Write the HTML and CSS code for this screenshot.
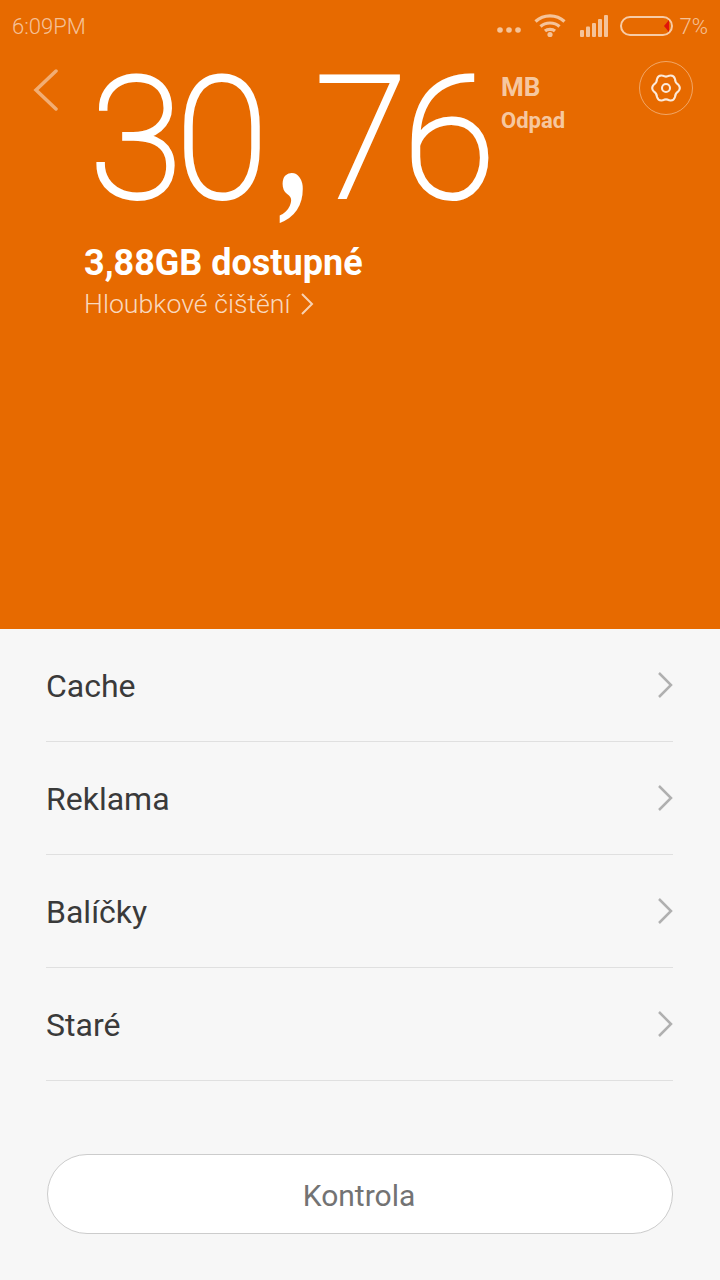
FILE: index.html
```html
<!DOCTYPE html>
<html lang="en">
<head>
  <meta charset="UTF-8" />
  <meta name="viewport" content="width=device-width, initial-scale=1.0" />
  <title>Cleaner</title>
  <link rel="stylesheet" href="styles.css">
</head>
<body>
  <div class="hero">
    <div class="statusbar">
      <span class="time">6:09PM</span>
      <div class="status-icons">
        <svg class="dots" width="26" height="8" viewBox="0 0 26 8"><circle cx="4" cy="4" r="2.8"/><circle cx="13" cy="4" r="2.8"/><circle cx="22" cy="4" r="2.8"/></svg>
        <svg class="wifi" width="32" height="25" viewBox="0 0 32 25"><path d="M1.5 8.5C9.5 1 22.5 1 30.5 8.5M6.5 13.5C11.5 8.8 20.5 8.8 25.5 13.5M11 18C13.5 15.8 18.500 15.800 21 18"/><circle cx="16" cy="21.500" r="2.600"/></svg>
        <svg class="signal" width="28" height="22" viewBox="0 0 28 22"><rect x="0" y="15" width="4" height="7" rx="1"/><rect x="6" y="11.500" width="4" height="10.500" rx="1"/><rect x="12" y="8" width="4" height="14" rx="1"/><rect x="18" y="4" width="4" height="18" rx="1"/><rect x="24" y="0" width="4" height="22" rx="1"/></svg>
        <div class="battery"><span class="battery-level"></span></div>
        <span class="percent">7%</span>
      </div>
    </div>
    <div class="summary">
      <svg class="back" width="26" height="42" viewBox="0 0 26 42"><path d="M23 2L3 21L23 40"/></svg>
      <div class="amount">30<span class="comma">,</span><span class="decimals">76</span></div>
      <div class="unit">
        <span class="unit-mb">MB</span>
        <span class="unit-label">Odpad</span>
      </div>
      <div class="settings">
        <svg width="34" height="34" viewBox="0 0 28 28"><path d="M24.14 11.28Q26.6 14 24.14 16.72Q21.45 18.3 21.42 21.42Q20.3 24.91 16.72 24.14Q14 22.6 11.28 24.14Q7.7 24.91 6.58 21.42Q6.55 18.3 3.86 16.72Q1.4 14 3.86 11.28Q6.55 9.7 6.58 6.58Q7.7 3.09 11.28 3.86Q14 5.4 16.72 3.86Q20.3 3.09 21.42 6.58Q21.45 9.7 24.14 11.28Z"/><circle cx="14" cy="14" r="3.3"/></svg>
      </div>
    </div>
    <div class="free">
      <div class="free-size">3,88GB dostupné</div>
      <div class="deep-clean">Hloubkové čištění
        <svg width="16" height="24" viewBox="0 0 16 24"><path d="M3 2L13 12L3 22"/></svg>
      </div>
    </div>
  </div>

  <div class="list">
    <div class="row"><span>Cache</span><svg width="18" height="28" viewBox="0 0 18 28"><path d="M3 2L15 14L3 26"/></svg></div>
    <div class="row"><span>Reklama</span><svg width="18" height="28" viewBox="0 0 18 28"><path d="M3 2L15 14L3 26"/></svg></div>
    <div class="row"><span>Balíčky</span><svg width="18" height="28" viewBox="0 0 18 28"><path d="M3 2L15 14L3 26"/></svg></div>
    <div class="row"><span>Staré</span><svg width="18" height="28" viewBox="0 0 18 28"><path d="M3 2L15 14L3 26"/></svg></div>
  </div>

  <div class="footer">
    <button class="scan">Kontrola</button>
  </div>
</body>
</html>
```

FILE: styles.css
```css
html, body {
  margin: 0;
  padding: 0;
}
body {
  width: 720px;
  height: 1280px;
  overflow: hidden;
  background: #f7f7f7;
  font-family: Roboto, sans-serif;
}
.hero {
  height: 629px;
  background: #e76a00;
  color: #fff;
}
.statusbar {
  height: 52px;
  padding: 0 12px;
  display: flex;
  justify-content: space-between;
  align-items: center;
  box-sizing: border-box;
  color: rgba(255,255,255,0.6);
  font-size: 22px;
}
.time {
  font-weight: 300;
}
.status-icons {
  display: flex;
  align-items: center;
}
.dots {
  fill: rgba(255,255,255,0.6);
  margin: 8px 12px 0 0;
}
.wifi {
  margin: -2px 14px 0 0;
}
.wifi path {
  fill: none;
  stroke: rgba(255,255,255,0.6);
  stroke-width: 3.2;
}
.wifi circle {
  fill: rgba(255,255,255,0.6);
}
.signal {
  fill: rgba(255,255,255,0.6);
  margin-right: 12px;
}
.battery {
  width: 49px;
  height: 16px;
  border: 2px solid rgba(255,255,255,0.65);
  border-radius: 10px;
  position: relative;
  margin-right: 7px;
}
.battery-level {
  position: absolute;
  right: 2px;
  top: 2px;
  width: 0;
  height: 0;
  border-top: 6px solid transparent;
  border-bottom: 6px solid transparent;
  border-right: 5px solid #e0140a;
}
.percent {
  font-weight: 300;
}
.summary {
  display: flex;
  align-items: flex-start;
  height: 180px;
}
.back {
  margin: 17px 0 0 33px;
}
.back path {
  fill: none;
  stroke: rgba(255,255,255,0.45);
  stroke-width: 3.500;
  stroke-linecap: round;
}
.amount {
  margin: -12px 0 0 31px;
  width: 411px;
  font-size: 168px;
  line-height: 200px;
  font-weight: 100;
  letter-spacing: -6px;
  -webkit-text-stroke: 4px #fff;
  white-space: nowrap;
}
.comma {
  display: inline-block;
  margin: 0 2px 0 10px;
  font-family: "Liberation Serif", serif;
  font-size: 165px;
  font-weight: 700;
  line-height: 0;
  letter-spacing: 0;
  -webkit-text-stroke: 0;
  transform: scaleX(0.7);
}
.decimals {
  letter-spacing: -4px;
}
.unit {
  display: flex;
  flex-direction: column;
  margin-top: 18px;
  color: rgba(255,255,255,0.65);
  font-weight: 700;
}
.unit-mb {
  font-size: 26px;
  line-height: 34px;
}
.unit-label {
  font-size: 22px;
  line-height: 33px;
}
.settings {
  width: 52px;
  height: 52px;
  margin: 9px 27px 0 auto;
  border: 1px solid rgba(255,255,255,0.4);
  border-radius: 50%;
  display: flex;
  align-items: center;
  justify-content: center;
}
.settings path, .settings circle {
  fill: none;
  stroke: #fff;
  stroke-width: 1.7;
  opacity: 0.85;
}
.free {
  margin: 9px 0 0 84px;
}
.free-size {
  font-size: 36px;
  line-height: 44px;
  font-weight: 700;
}
.deep-clean {
  display: flex;
  align-items: center;
  gap: 9px;
  font-size: 26.7px;
  line-height: 38px;
  font-weight: 300;
  color: rgba(255,255,255,0.75);
}
.deep-clean path {
  fill: none;
  stroke: rgba(255,255,255,0.7);
  stroke-width: 2;
}
.list {
  margin: 0 47px 0 46px;
}
.row {
  height: 112px;
  border-bottom: 1px solid #e0e0e0;
  display: flex;
  justify-content: space-between;
  align-items: center;
  font-size: 32px;
  color: #3a3a3a;
}
.row span {
  margin-top: 2px;
}
.row svg {
  margin-right: -1px;
}
.row path {
  fill: none;
  stroke: #b0b0b0;
  stroke-width: 2.500;
}
.footer {
  margin: 73px 47px 0;
}
.scan {
  display: block;
  width: 100%;
  height: 80px;
  box-sizing: border-box;
  padding: 2px 8px 0 6px;
  background: #fff;
  border: 1px solid #ccc;
  border-radius: 40px;
  font-family: Roboto, sans-serif;
  font-size: 30px;
  color: #737373;
}
```
